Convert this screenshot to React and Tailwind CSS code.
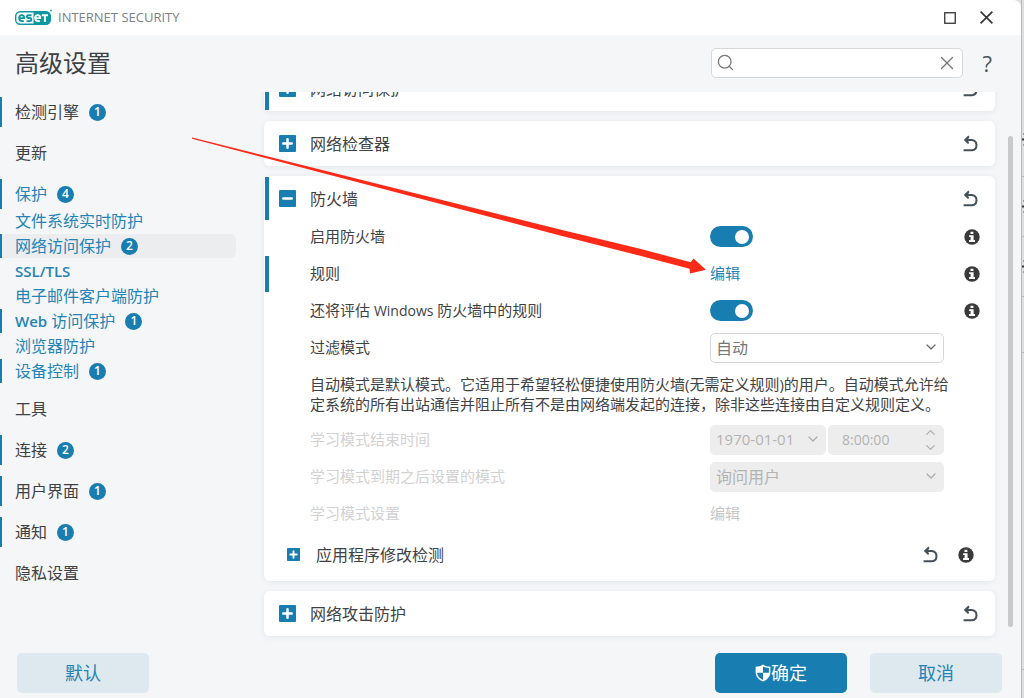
import React, { useState } from "react";
import { ChevronDown, ChevronUp, Search, X } from "lucide-react";
import clsx from "clsx";

const NAV = [
  { name: "检测引擎", badge: 1 },
  { name: "更新" },
  {
    name: "保护",
    badge: 4,
    open: true,
    children: [
      { name: "文件系统实时防护" },
      { name: "网络访问保护", badge: 2, active: true },
      { latin: "SSL/TLS" },
      { name: "电子邮件客户端防护" },
      { latin: "Web", name: " 访问保护", badge: 1 },
      { name: "浏览器防护" },
      { name: "设备控制", badge: 1 },
    ],
  },
  { name: "工具" },
  { name: "连接", badge: 2 },
  { name: "用户界面", badge: 1 },
  { name: "通知", badge: 1 },
  { name: "隐私设置" },
];

function Logo() {
  return (
    <svg width="37" height="17" viewBox="0 0 37 17" aria-hidden="true">
      <rect x="0.7" y="2.7" width="34.6" height="12.6" rx="4.5" fill="#fff" stroke="#0d979f" strokeWidth="1.4" />
      <path d="M18.5 2.5H31a4.5 4.5 0 0 1 4.5 4.5v4a4.5 4.5 0 0 1-4.5 4.5H18.5z" fill="#0d979f" />
      {/* e s */}
      <g fill="none" stroke="#0d979f" strokeWidth="1.9">
        <path d="M4.2 9.1h5c0-2-1-3-2.5-3S4.2 7.3 4.2 9.1s1 3 2.7 3h2" />
        <path d="M16.6 6.2h-3.2c-2 0-2 2.7 0 2.8h1.3c2.2 0 2.2 3.1 0 3.1h-3.2" />
      </g>
      {/* e T */}
      <g fill="none" stroke="#fff" strokeWidth="1.9">
        <path d="M20.2 9.1h5c0-2-1-3-2.5-3s-2.5 1.2-2.5 3 1 3 2.7 3h2" />
        <path d="M26.8 6.2H33M29.9 6.2V13" />
      </g>
      <circle cx="36" cy="1.5" r="0.9" fill="#0d979f" />
    </svg>
  );
}

function UndoIcon() {
  return (
    <svg width="16" height="17" viewBox="0 0 16 17" fill="none" aria-hidden="true">
      <path d="M2.5 5H9a5.2 5.2 0 0 1 0 10.300H0.6" stroke="#44515b" strokeWidth="2" />
      <path d="M0.8 5 5.300 0.500 6.600 1.900 5.200 4v2l1 2-1.200 1z" fill="#44515b" />
    </svg>
  );
}

function InfoIcon() {
  return (
    <svg width="16" height="16" viewBox="0 0 16 16" aria-hidden="true">
      <circle cx="8" cy="8" r="7.7" fill="#3a3a3a" />
      <path d="M6.500 2.700h2.900v2.400H6.500zM5.100 6.200h4.500v4.900H11v1.800H5.100v-1.800h1.500V8H5.100z" fill="#fff" />
    </svg>
  );
}

function ShieldIcon() {
  return (
    <svg width="16" height="18" viewBox="0 0 16 18" aria-hidden="true">
      <path d="M8 0.5C6 2 3.5 2.7 0.6 2.8V8c0 4.5 3 7.7 7.4 9.5 4.4-1.8 7.4-5 7.4-9.5V2.800C12.5 2.7 10 2 8 0.5z" fill="#fff" />
      <path d="M8 2.4v6.300h5.900V4.100C11.700 3.900 9.700 3.300 8 2.400zM8 8.700H2.100c.2 3.200 2.400 5.600 5.900 7.200z" fill="#187db0" />
    </svg>
  );
}

function ExpandIcon({ open, small }) {
  return (
    <svg width={small ? 13 : 17} height={small ? 13 : 17} viewBox="0 0 17 17" aria-hidden="true">
      <rect width="17" height="17" rx="1" fill="#187db0" />
      <path d={open ? "M4.300 8.500h8.400" : "M4.300 8.500h8.400M8.500 4.300v8.400"} stroke="#fff" strokeWidth="2.500" strokeLinecap="round" />
    </svg>
  );
}

function Badge({ value }) {
  return (
    <span className="grid size-[17px] shrink-0 place-items-center rounded-full bg-[#187db0] text-xs font-semibold leading-4 text-white">
      {value}
    </span>
  );
}

function NavLink({ item, sub, open }) {
  return (
    <a
      href="#"
      className={clsx(
        "flex items-center gap-2.5",
        sub ? "h-6" : "h-[30px]",
        sub || open ? "text-[#2584b5]" : "text-[#3f4245]",
        item.active && "rounded-r-md bg-[#ebedef]"
      )}
    >
      <span className={clsx("-mr-2.5 w-0.5 self-stretch", item.badge && "bg-[#187db0]")} />
      <span className="pl-[13px] whitespace-pre">
        {item.latin && <span className="text-[15px] font-semibold">{item.latin}</span>}
        {item.name}
      </span>
      {item.badge && <Badge value={item.badge} />}
    </a>
  );
}

function IconButton({ label, children }) {
  return (
    <button type="button" aria-label={label} className="grid shrink-0 place-items-center">
      {children}
    </button>
  );
}

function CardHeader({ title, open, changed }) {
  return (
    <div className="flex h-[45px] items-center pr-4 pl-px">
      <span className={clsx("h-[43px] w-1", changed && "bg-[#187db0]")} />
      <button type="button" aria-expanded={!!open} className="flex items-center gap-3.5 pl-2.5 text-base">
        <ExpandIcon open={open} />
        {title}
      </button>
      <span className="flex-1" />
      <IconButton label="还原">
        <UndoIcon />
      </IconButton>
    </div>
  );
}

function Card({ children }) {
  return <section className="shrink-0 rounded-md bg-white shadow-[0_1px_6px_rgba(40,60,80,0.08)]">{children}</section>;
}

function Row({ label, htmlFor, changed, disabled, info, children }) {
  return (
    <div className="flex h-[37px] items-center pr-[15px] pl-px">
      <span className={clsx("h-9 w-1 shrink-0", changed && "bg-[#187db0]")} />
      <label htmlFor={htmlFor} className={clsx("w-[441px] shrink-0 pl-[41px]", disabled && "text-[#d2d2d2]")}>
        {label}
      </label>
      {children}
      <span className="flex-1" />
      {info && (
        <IconButton label="信息">
          <InfoIcon />
        </IconButton>
      )}
    </div>
  );
}

function Toggle({ id }) {
  const [on, setOn] = useState(true);
  return (
    <input
      id={id}
      type="checkbox"
      role="switch"
      checked={on}
      onChange={() => setOn(!on)}
      className="flex h-[21px] w-[43px] appearance-none items-center rounded-full bg-gray-400 px-1 before:size-3.5 before:rounded-full before:bg-white checked:justify-end checked:bg-[#187db0]"
    />
  );
}

function Select({ id, value, disabled, className }) {
  return (
    <div className={clsx("relative", className)}>
      <select
        id={id}
        disabled={disabled}
        className="block h-[30px] w-full appearance-none rounded-[5px] border border-[#d4d6d8] bg-white px-[5px] text-[#777] disabled:border-[#ededed] disabled:bg-[#ededed] disabled:text-[#b3b3b3] disabled:opacity-100"
      >
        <option>{value}</option>
      </select>
      <ChevronDown
        size={16}
        strokeWidth={1.8}
        className={clsx("pointer-events-none absolute top-1.5 right-[5px]", disabled ? "text-[#aaa]" : "text-[#666]")}
      />
    </div>
  );
}

function FirewallCard() {
  return (
    <Card>
      <CardHeader title="防火墙" open changed />
      <div className="-mt-[3px] pb-1 text-[15px]">
        <Row label="启用防火墙" htmlFor="enable" info>
          <Toggle id="enable" />
        </Row>
        <Row label="规则" changed info>
          <a href="#" className="text-[#2584b5]">
            编辑
          </a>
        </Row>
        <Row
          label={
            <>
              还将评估 <span className="text-sm">Windows</span> 防火墙中的规则
            </>
          }
          htmlFor="windows-rules"
          info
        >
          <Toggle id="windows-rules" />
        </Row>
        <Row label="过滤模式" htmlFor="mode">
          <Select id="mode" value="自动" className="w-[234px] text-base" />
        </Row>
        <p className="mt-2 mb-[7px] pr-4 pl-[46px] leading-5">
          自动模式是默认模式。它适用于希望轻松便捷使用防火墙(无需定义规则)的用户。自动模式允许给
          <br />
          定系统的所有出站通信并阻止所有不是由网络端发起的连接，除非这些连接由自定义规则定义。
        </p>
        <Row label="学习模式结束时间" htmlFor="end-date" disabled>
          <div className="flex gap-0.5">
            <Select id="end-date" value="1970-01-01" disabled className="w-[116px]" />
            <div className="flex h-[30px] w-[116px] items-center rounded-[5px] bg-[#ededed] pr-1.5 pl-3.5 text-sm text-[#b3b3b3]">
              <input aria-label="时间" disabled defaultValue="8:00:00" className="w-full min-w-0" />
              <div className="flex flex-col text-[#aaa]">
                <button type="button" disabled aria-label="增加">
                  <ChevronUp size={15} strokeWidth={1.8} />
                </button>
                <button type="button" disabled aria-label="减少">
                  <ChevronDown size={15} strokeWidth={1.8} />
                </button>
              </div>
            </div>
          </div>
        </Row>
        <Row label="学习模式到期之后设置的模式" htmlFor="after-mode" disabled>
          <Select id="after-mode" value="询问用户" disabled className="w-[234px] text-base" />
        </Row>
        <Row label="学习模式设置" disabled>
          <button type="button" disabled className="text-[#c6c6c6]">
            编辑
          </button>
        </Row>
        <div className="flex h-[45px] items-center pr-[21px] pl-[23px] text-base">
          <button type="button" aria-expanded="false" className="flex items-center gap-4">
            <ExpandIcon small />
            应用程序修改检测
          </button>
          <span className="flex-1" />
          <div className="flex gap-[19px]">
            <IconButton label="还原">
              <UndoIcon />
            </IconButton>
            <IconButton label="信息">
              <InfoIcon />
            </IconButton>
          </div>
        </div>
      </div>
    </Card>
  );
}

// Red pointer that runs from the side menu to the rules "edit" link
function Pointer() {
  return (
    <svg
      width="515"
      height="138"
      viewBox="0 0 515 138"
      className="pointer-events-none absolute top-[137px] left-[192px]"
      aria-hidden="true"
    >
      <path d="M0 0.5 L368 92.5 L448 111.7 L498.7 125.3 L501.5 121.5 L514 132.7 L498 136.5 L497.5 131.7 L448 118.7 L368 98.5 L0 1.8z" fill="#ff2a17" />
    </svg>
  );
}

// Slice of the window that sits behind this one
function BackgroundEdge() {
  return (
    <svg width="3" height="698" className="shrink-0" aria-hidden="true">
      <rect width="3" height="698" fill="#dedede" />
      <rect width="1" height="698" fill="#b9b9b9" />
      <path d="M1 176.5h2M1 236.5h2M1 296.5h2M1 352.5h2M1 669.5h2" stroke="#bdbdbd" />
      <path d="M1 139.5h2M1 206.5h2M1 266.5h2" stroke="#333b42" strokeWidth="2" />
      <path d="M2 134h1M2 145h1M2 201h1M2 212h1M2 261h1M2 272h1" stroke="#666" />
    </svg>
  );
}

export default function App() {
  const wideButton = "flex h-10 w-[132px] items-center justify-center rounded-[5px] text-lg";
  return (
    <div className="relative flex h-screen overflow-hidden bg-[#dedede] font-['Open_Sans','Noto_Sans_CJK_SC',sans-serif] text-base text-[#3f4245]">
      <div className="flex min-w-0 flex-1 flex-col overflow-hidden rounded-tr-lg bg-[#f4f6f8]">
        {/* Title bar */}
        <div className="flex h-[35px] shrink-0 items-center bg-white pr-7 pl-[15px]">
          <Logo />
          <span className="ml-1.5 text-[13px] text-[#7b8287]">INTERNET SECURITY</span>
          <div className="ml-auto flex items-center gap-6 text-[#333]">
            <button type="button" aria-label="最大化">
              <svg width="12" height="12" viewBox="0 0 12 12" aria-hidden="true">
                <rect x="0.75" y="0.75" width="10.5" height="10.5" fill="none" stroke="currentColor" strokeWidth="1.3" />
              </svg>
            </button>
            <button type="button" aria-label="关闭">
              <svg width="13" height="13" viewBox="0 0 13 13" aria-hidden="true">
                <path d="M0.6 0.6 12.4 12.4M12.4 0.6 0.6 12.4" stroke="currentColor" strokeWidth="1.6" />
              </svg>
            </button>
          </div>
        </div>

        {/* Page header */}
        <header className="flex h-[57px] shrink-0 items-center justify-between pr-[29px] pb-0.5 pl-[15px]">
          <h1 className="text-2xl">高级设置</h1>
          <div className="flex items-center gap-5">
            <div className="flex h-[30px] w-[252px] items-center rounded-[5px] border border-[#d5d7d9] bg-white px-1 text-[#777]">
              <Search size={19} strokeWidth={1.600} className="shrink-0" />
              <input aria-label="搜索" className="min-w-0 flex-1 outline-none" />
              <button type="button" aria-label="清除">
                <X size={22} strokeWidth={1.500} />
              </button>
            </div>
            <button type="button" aria-label="帮助" className="text-[22px] leading-6 text-[#4c565e]">
              ?
            </button>
          </div>
        </header>

        <div className="flex min-h-0 flex-1">
          {/* Side menu */}
          <nav className="flex w-[236px] shrink-0 flex-col gap-[11px] pt-[5px]">
            {NAV.map((item) => (
              <div key={item.name}>
                <NavLink item={item} open={item.open} />
                {item.children && (
                  <div className="flex flex-col gap-px">
                    {item.children.map((child) => (
                      <NavLink key={child.name || child.latin} item={child} sub />
                    ))}
                  </div>
                )}
              </div>
            ))}
          </nav>

          {/* Settings, scrolled down to the last section */}
          <main className="flex min-w-0 flex-1 flex-col justify-end gap-2.5 overflow-hidden pr-[13px] pb-2.5 pl-7">
            <Card>
              <CardHeader title="网络访问保护" changed />
            </Card>
            <Card>
              <CardHeader title="网络检查器" />
            </Card>
            <FirewallCard />
            <Card>
              <CardHeader title="网络攻击防护" />
            </Card>
          </main>
          <div className="flex w-[13px] shrink-0 pt-11 pb-[19px]">
            <div className="w-[5px] rounded-full bg-[#c8c9ca]" />
          </div>
        </div>

        <footer className="flex shrink-0 gap-[23px] pt-[7px] pr-[19px] pb-[5px] pl-[17px]">
          <button type="button" className={clsx(wideButton, "mr-auto bg-[#dee9ef] text-[#2584b5]")}>
            默认
          </button>
          <button type="button" className={clsx(wideButton, "bg-[#187db0] text-white")}>
            <ShieldIcon />
            确定
          </button>
          <button type="button" className={clsx(wideButton, "bg-[#dee9ef] text-[#2584b5]")}>
            取消
          </button>
        </footer>
      </div>
      <BackgroundEdge />
      <Pointer />
    </div>
  );
}
